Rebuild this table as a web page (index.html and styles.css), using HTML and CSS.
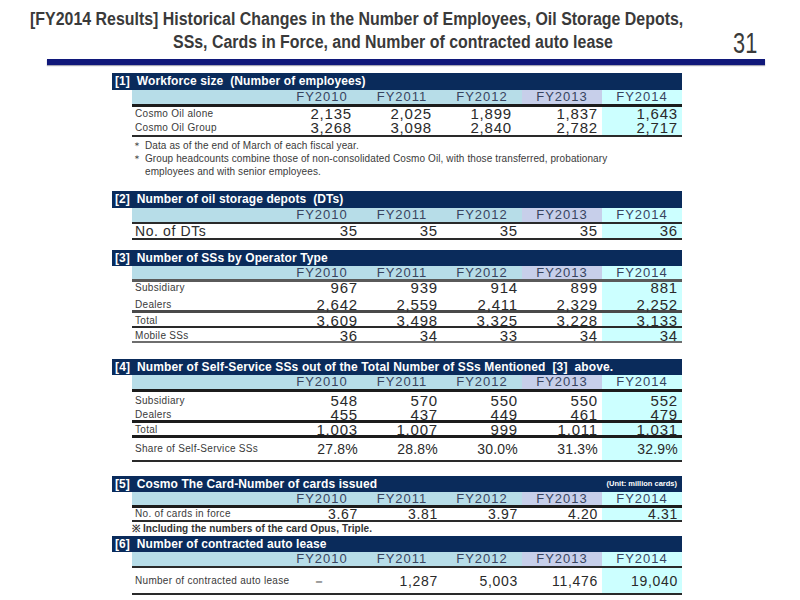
FILE: index.html
```html
<!DOCTYPE html>
<html lang="en">
<head>
<meta charset="utf-8">
<title>FY2014 Results</title>
<link rel="stylesheet" href="styles.css">
</head>
<body>
<header class="title">
  <div class="title-text">
    <div class="line1"><span class="cond">[FY2014 Results] Historical Changes in the Number of Employees, Oil Storage Depots,</span></div>
    <div class="line2"><span class="cond">SSs, Cards in Force, and Number of contracted auto lease</span></div>
  </div>
  <div class="page-no"><span class="cond-num">31</span></div>
</header>
<div class="rule"></div>

<main class="content">
  <section class="sec sec1">
    <div class="bar">[1]&nbsp; Workforce size&nbsp; (Number of employees)</div>
    <table class="data wide-pad">
      <colgroup><col class="c-label"><col class="c-yr"><col class="c-yr"><col class="c-yr"><col class="c-yr"><col class="c-yr"></colgroup>
      <thead><tr class="hd dark"><th></th><th>FY2010</th><th>FY2011</th><th>FY2012</th><th class="h13">FY2013</th><th class="h14">FY2014</th></tr></thead>
      <tbody>
        <tr class="r14 mid-row"><td class="lbl">Cosmo Oil alone</td><td>2,135</td><td>2,025</td><td>1,899</td><td>1,837</td><td class="n14">1,643</td></tr>
        <tr class="r14 mid-row b-thin"><td class="lbl">Cosmo Oil Group</td><td>3,268</td><td>3,098</td><td>2,840</td><td>2,782</td><td class="n14">2,717</td></tr>
      </tbody>
    </table>
    <div class="notes">
      <p>＊ Data as of the end of March of each fiscal year.</p>
      <p>＊ Group headcounts combine those of non-consolidated Cosmo Oil, with those transferred, probationary<br><span class="indent">employees and with senior employees.</span></p>
    </div>
  </section>

  <section class="sec sec2">
    <div class="bar">[2]&nbsp; Number of oil storage depots&nbsp; (DTs)</div>
    <table class="data">
      <colgroup><col class="c-label"><col class="c-yr"><col class="c-yr"><col class="c-yr"><col class="c-yr"><col class="c-yr"></colgroup>
      <thead><tr class="hd mid"><th></th><th>FY2010</th><th>FY2011</th><th>FY2012</th><th class="h13">FY2013</th><th class="h14">FY2014</th></tr></thead>
      <tbody>
        <tr class="r14 mid-row b-thin"><td class="lbl big">No. of DTs</td><td>35</td><td>35</td><td>35</td><td>35</td><td class="n14">36</td></tr>
      </tbody>
    </table>
  </section>

  <section class="sec sec3">
    <div class="bar">[3]&nbsp; Number of SSs by Operator Type</div>
    <table class="data">
      <colgroup><col class="c-label"><col class="c-yr"><col class="c-yr"><col class="c-yr"><col class="c-yr"><col class="c-yr"></colgroup>
      <thead><tr class="hd grey"><th></th><th>FY2010</th><th>FY2011</th><th>FY2012</th><th class="h13">FY2013</th><th class="h14">FY2014</th></tr></thead>
      <tbody>
        <tr class="r11"><td class="lbl">Subsidiary</td><td>967</td><td>939</td><td>914</td><td>899</td><td class="n14">881</td></tr>
        <tr class="r17 b-grey3"><td class="lbl">Dealers</td><td>2,642</td><td>2,559</td><td>2,411</td><td>2,329</td><td class="n14">2,252</td></tr>
        <tr class="r13 b-thin"><td class="lbl">Total</td><td>3,609</td><td>3,498</td><td>3,325</td><td>3,228</td><td class="n14">3,133</td></tr>
        <tr class="r13 b-grey2"><td class="lbl">Mobile SSs</td><td>36</td><td>34</td><td>33</td><td>34</td><td class="n14">34</td></tr>
      </tbody>
    </table>
  </section>

  <section class="sec sec4">
    <div class="bar">[4]&nbsp; Number of Self-Service SSs out of the Total Number of SSs Mentioned&nbsp; [3]&nbsp; above.</div>
    <table class="data">
      <colgroup><col class="c-label"><col class="c-yr"><col class="c-yr"><col class="c-yr"><col class="c-yr"><col class="c-yr"></colgroup>
      <thead><tr class="hd dark"><th></th><th>FY2010</th><th>FY2011</th><th>FY2012</th><th class="h13">FY2013</th><th class="h14">FY2014</th></tr></thead>
      <tbody>
        <tr class="r14"><td class="lbl">Subsidiary</td><td>548</td><td>570</td><td>550</td><td>550</td><td class="n14">552</td></tr>
        <tr class="r14 b-thick"><td class="lbl">Dealers</td><td>455</td><td>437</td><td>449</td><td>461</td><td class="n14">479</td></tr>
        <tr class="r12 b-thick"><td class="lbl">Total</td><td>1,003</td><td>1,007</td><td>999</td><td>1,011</td><td class="n14">1,031</td></tr>
        <tr class="r22 b-thin pct mid-row"><td class="lbl">Share of Self-Service SSs</td><td>27.8%</td><td>28.8%</td><td>30.0%</td><td>31.3%</td><td class="n14">32.9%</td></tr>
      </tbody>
    </table>
  </section>

  <section class="sec sec5">
    <div class="bar bar-split"><span>[5]&nbsp; Cosmo The Card-Number of cards issued</span><span class="unit">(Unit: million cards)</span></div>
    <table class="data">
      <colgroup><col class="c-label"><col class="c-yr"><col class="c-yr"><col class="c-yr"><col class="c-yr"><col class="c-yr"></colgroup>
      <thead><tr class="hd dark"><th></th><th>FY2010</th><th>FY2011</th><th>FY2012</th><th class="h13">FY2013</th><th class="h14">FY2014</th></tr></thead>
      <tbody>
        <tr class="r12 mid-row b-thin"><td class="lbl">No. of cards in force</td><td>3.67</td><td>3.81</td><td>3.97</td><td>4.20</td><td class="n14">4.31</td></tr>
      </tbody>
    </table>
    <p class="card-note">※ Including the numbers of the card Opus, Triple.</p>
  </section>

  <section class="sec sec6">
    <div class="bar">[6]&nbsp; Number of contracted auto lease</div>
    <table class="data">
      <colgroup><col class="c-label"><col class="c-yr"><col class="c-yr"><col class="c-yr"><col class="c-yr"><col class="c-yr"></colgroup>
      <thead><tr class="hd mid"><th></th><th>FY2010</th><th>FY2011</th><th>FY2012</th><th class="h13">FY2013</th><th class="h14">FY2014</th></tr></thead>
      <tbody>
        <tr class="r25 b-thin mid-row"><td class="lbl">Number of contracted auto lease</td><td class="dash">－</td><td>1,287</td><td>5,003</td><td>11,476</td><td class="n14">19,040</td></tr>
      </tbody>
    </table>
  </section>
</main>
</body>
</html>
```

FILE: styles.css
```css
* { box-sizing: border-box; }
html, body { margin: 0; padding: 0; background: #fff; }
body {
  width: 800px;
  height: 600px;
  overflow: hidden;
  font-family: "Liberation Sans", Arial, sans-serif;
  color: #333;
}

/* ---------- title ---------- */
.title {
  display: flex;
  align-items: flex-start;
  padding-top: 8px;
  height: 54px;
}
.title-text {
  flex: 1 1 0;
  min-width: 0;
  font-weight: bold;
  font-size: 18px;
  line-height: 23px;
  color: #3a3a3a;
  white-space: nowrap;
}
.line1 { padding-left: 30px; }
.line2 { padding-left: 173px; }
.cond {
  display: inline-block;
  transform: scaleX(0.885);
  transform-origin: left center;
}
.page-no {
  flex: none;
  font-size: 29px;
  line-height: 29px;
  margin-top: 21px;
  margin-right: 43px;
  color: #3a3a3a;
}
.cond-num {
  display: inline-block;
  transform: scaleX(0.75);
  transform-origin: right center;
}
.rule {
  margin: 5px 35px 0 47px;
  height: 6px;
  background: #10187a;
  box-shadow: 0 1px 1px rgba(0,0,40,0.35);
}

/* ---------- sections ---------- */
.content { padding-left: 112px; width: 682px; }
.sec1 { margin-top: 8px; }
.sec2 { margin-top: 13px; }
.sec3 { margin-top: 10px; }
.sec4 { margin-top: 16px; }
.sec5 { margin-top: 14px; }
.sec6 { margin-top: 0; }

.bar {
  background: #0a2b5b;
  color: #fff;
  font-weight: bold;
  font-size: 12px;
  height: 16px;
  line-height: 16px;
  padding-left: 3px;
  white-space: nowrap;
  letter-spacing: 0.1px;
}
.sec1 .bar, .sec2 .bar { height: 17px; line-height: 17px; }
.sec4 .bar { letter-spacing: 0.13px; }
.bar-split { display: flex; justify-content: space-between; }
.unit { font-size: 7.5px; font-weight: bold; padding-right: 5px; letter-spacing: 0; }

.data {
  margin-left: 20px;
  width: 550px;
  border-collapse: collapse;
  table-layout: fixed;
}
.c-label { width: 150px; }
.c-yr { width: 80px; }

.data th, .data td { padding: 0; box-sizing: content-box; }

.hd th {
  height: 14px;
  line-height: 14px;
  background: #b7dde8;
  font-weight: normal;
  font-size: 13px;
  letter-spacing: 1px;
  color: #38445f;
  text-align: center;
}
.sec3 .hd th, .sec5 .hd th { height: 13px; line-height: 13px; }
.hd th.h13 { background: #c7cfea; }
.hd th.h14 { background: #ccffff; }
.hd.dark th { border-bottom: 3px solid #1c1c1c; }
.hd.mid th { border-bottom: 2px solid #2a2a2a; }
.hd.grey th { border-bottom: 3px solid #5a5a5a; }

.data td {
  text-align: right;
  padding-right: 4px;
  font-size: 15px;
  line-height: 10px;
  letter-spacing: 0.8px;
  color: #2a2a2a;
  vertical-align: bottom;
  white-space: nowrap;
}
.wide-pad td:nth-child(2),
.wide-pad td:nth-child(3),
.wide-pad td:nth-child(4) { padding-right: 10px; }

.data td.lbl {
  text-align: left;
  padding-left: 3px;
  font-size: 10px;
  line-height: 11px;
  letter-spacing: 0.3px;
  color: #3a3a3a;
}
.data td.lbl.big { font-size: 14px; letter-spacing: 0.6px; color: #2c2c2c; }
.data td.n14 { background: #ccffff; }
.data td.dash { text-align: center; padding-right: 6px; }

.r11 td { height: 11px; }
.r12 td { height: 12px; }
.r13 td { height: 13px; }
.r14 td { height: 14px; }
.r17 td { height: 17px; }
.r22 td { height: 22px; }
.r25 td { height: 25px; }
.mid-row td, .data .mid-row td.lbl { vertical-align: middle; line-height: 12px; }
.pct td { font-size: 14px; letter-spacing: 0.2px; }
.sec5 td, .sec6 td { font-size: 14px; letter-spacing: 0.7px; }
.sec5 td.lbl, .sec6 td.lbl { font-size: 10px; letter-spacing: 0.3px; }

.b-thin td { border-bottom: 2px solid #2a2a2a; }
.b-thick td { border-bottom: 3px solid #1c1c1c; }
.b-grey3 td { border-bottom: 3px solid #4a4a4a; }
.b-grey2 td { border-bottom: 2px solid #6e6e6e; }

.notes {
  margin-left: 20px;
  padding-top: 2px;
  font-size: 10px;
  line-height: 13px;
  color: #3a3a3a;
  letter-spacing: 0.1px;
}
.notes p { margin: 0; }
.indent { padding-left: 13px; }

.card-note {
  margin: 0 0 0 20px;
  height: 14px;
  line-height: 14px;
  font-size: 10px;
  font-weight: bold;
  color: #333;
  letter-spacing: 0.1px;
}
```
